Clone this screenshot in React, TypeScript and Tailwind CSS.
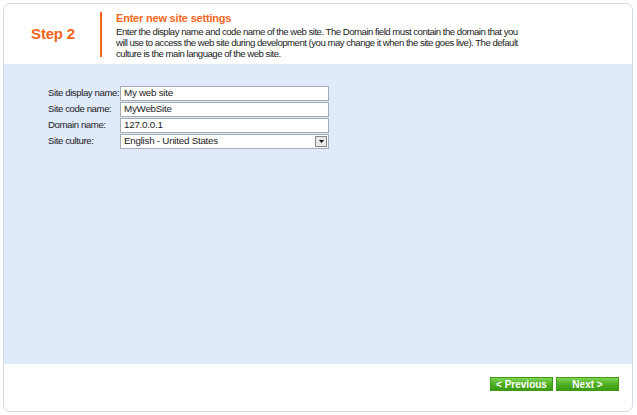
export default function App() {
  return (
    <div className="h-[415px] w-[637px] bg-white p-[3px] font-['Liberation_Sans',Arial,sans-serif] text-[11px] text-[#222]">
      <div className="flex h-[409px] w-[630px] flex-col overflow-hidden rounded-[7px] border border-[#cfdbe8] bg-white">
        {/* header */}
        <div className="flex h-[60px] shrink-0 items-center">
          <div className="flex w-[96px] justify-center pl-[2px] text-[15px] font-bold tracking-[-0.2px] text-[#f4661c]">Step 2</div>
          <div className="mt-[0px] h-[45px] w-[2px] bg-[#f4661c]" />
          <div className="ml-[14px] mt-[2px] whitespace-nowrap">
            <div className="mb-[1px] text-[11px] font-bold leading-[13px] tracking-[-0.2px] text-[#f4661c]">Enter new site settings</div>
            <div className="text-[9.6px] leading-[11px] tracking-[-0.5px] text-[#222]">
              Enter the display name and code name of the web site. The Domain field must contain the domain that you
              <br />
              will use to access the web site during development (you may change it when the site goes live). The default
              <br />
              culture is the main language of the web site.
            </div>
          </div>
        </div>

        {/* body */}
        <div className="flex-1 bg-[#dfeafb] pl-[44px] pt-[22px]">
          <div className="grid grid-cols-[71px_209px] gap-x-[1px] gap-y-[1px] text-[9.8px] tracking-[-0.25px]">
            <Label>Site display name:</Label>
            <Field value="My web site" />
            <Label>Site code name:</Label>
            <Field value="MyWebSite" />
            <Label>Domain name:</Label>
            <Field value="127.0.0.1" />
            <Label>Site culture:</Label>
            <div className="flex h-[15px] items-center border border-[#a5acb5] bg-white pl-[3px]">
              <span className="flex-1">English - United States</span>
              <span className="mr-[1px] flex h-[11px] w-[12px] items-center justify-center border border-[#888] bg-[#e8e8e8]">
                <svg width="5" height="3" viewBox="0 0 5 3">
                  <path d="M0 0h5L2.5 3z" fill="#111" />
                </svg>
              </span>
            </div>
          </div>
        </div>

        {/* footer */}
        <div className="flex h-[47px] shrink-0 items-start justify-end gap-[3px] pr-[13px] pt-[13px]">
          <GreenButton>&lt; Previous</GreenButton>
          <GreenButton>Next &gt;</GreenButton>
        </div>
      </div>
    </div>
  )
}

function Label({ children }: { children: React.ReactNode }) {
  return <div className="flex h-[15px] items-center whitespace-nowrap text-[9.6px] tracking-[-0.4px] text-[#222]">{children}</div>
}

function Field({ value }: { value: string }) {
  return (
    <div className="flex h-[15px] items-center border border-[#a5acb5] bg-white pl-[3px]">{value}</div>
  )
}

function GreenButton({ children }: { children: React.ReactNode }) {
  return (
    <button className="flex h-[14px] w-[63px] items-center justify-center border border-[#3f9a12] bg-[linear-gradient(#7fd455,#4fb022_50%,#3c9a14)] text-[10px] font-bold text-white">
      {children}
    </button>
  )
}
